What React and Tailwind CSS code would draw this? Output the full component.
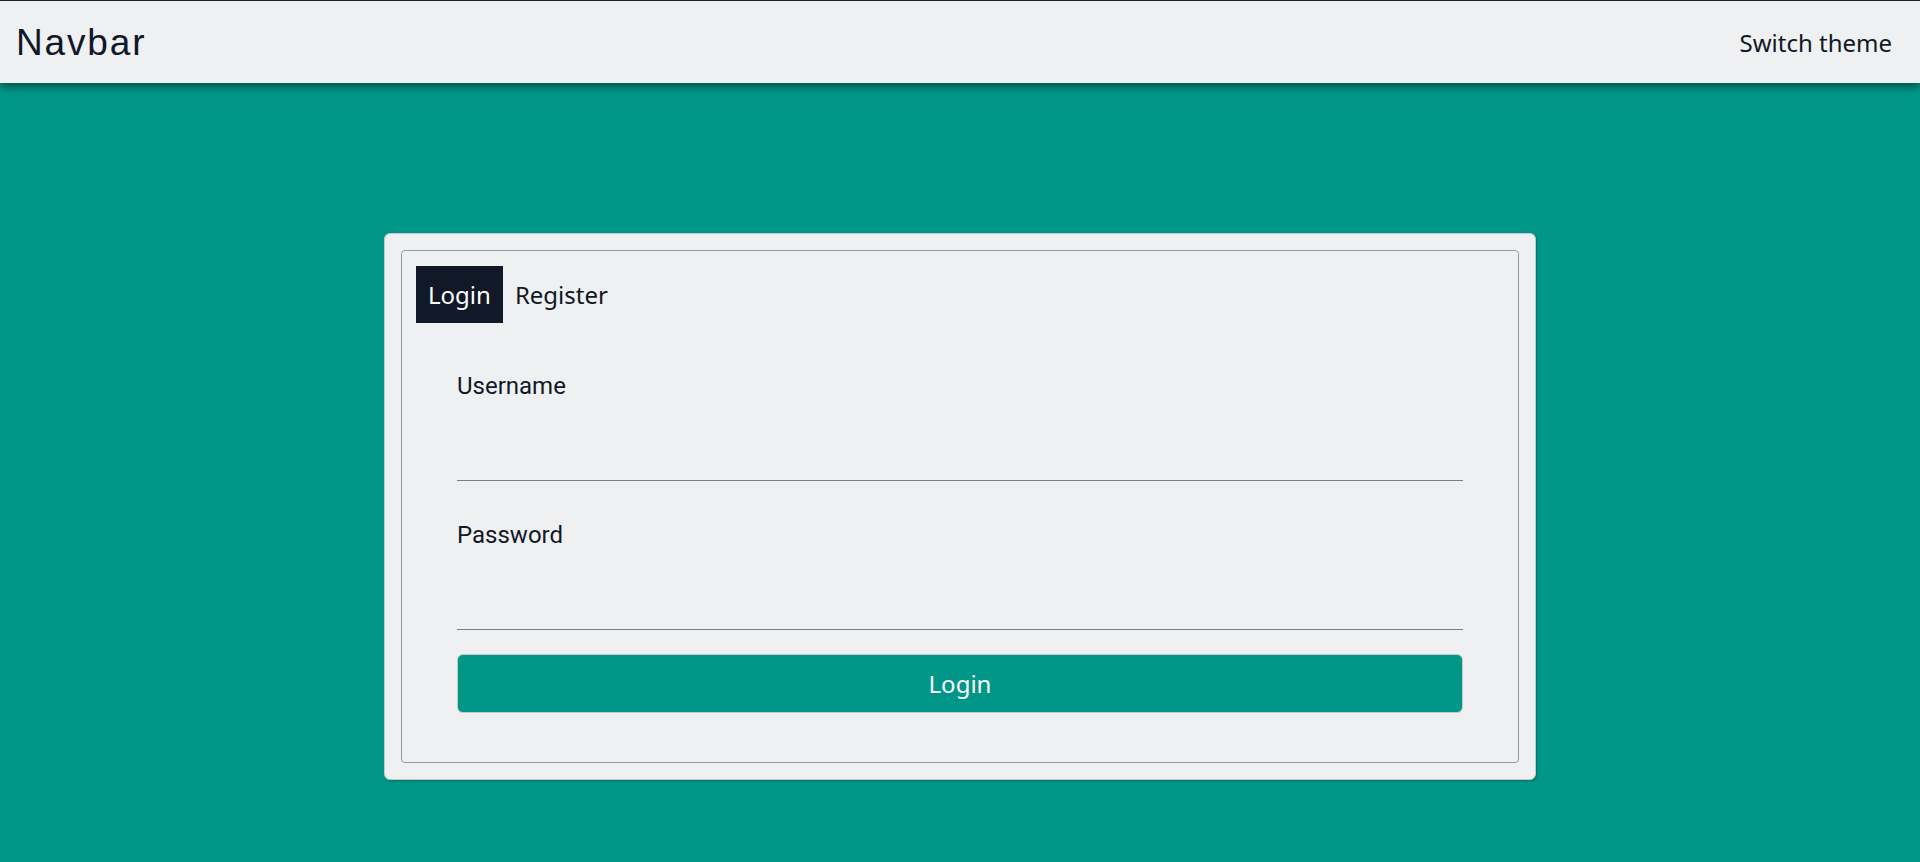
import React, { useState } from 'react'

function Navbar() {
  return (
    <nav className="relative z-10 flex h-[83px] items-center justify-between border-t border-[#222] bg-[#eff0f2] pl-[16px] pr-[28px] shadow-[0_4px_8px_rgba(0,0,0,0.45)]">
      <span className="text-[37px] leading-none tracking-[0.05em] text-[#111827] font-['Liberation_Sans',Arial,sans-serif]">
        Navbar
      </span>
      <button className="pt-[2px] text-[24px] text-[#111827] font-['Noto_Sans',sans-serif]">
        Switch theme
      </button>
    </nav>
  )
}

function Field({ label, type }) {
  return (
    <div className="flex flex-col">
      <label className="text-[24px] leading-[36px] text-[#111827] font-['Roboto',sans-serif]">
        {label}
      </label>
      <input
        type={type}
        className="h-[77px] w-full border-b border-[#808080] bg-transparent text-[24px] focus:outline-none font-['Roboto',sans-serif]"
      />
    </div>
  )
}

export default function App() {
  const [tab, setTab] = useState('login')

  return (
    <div className="min-h-screen bg-[#009688] font-['Noto_Sans',sans-serif]">
      <Navbar />

      <main className="flex justify-center pt-[150px]">
        <div className="w-[1152px] rounded-md border border-[#c4c6c8] bg-[#eff0f2] p-4 shadow-[1px_1px_2px_rgba(0,0,0,0.25)]">
          <div className="rounded border border-[#9a9a9a] px-[14px] pt-[15px] pb-[13px]">
            <div className="flex">
              <button
                onClick={() => setTab('login')}
                className={
                  tab === 'login'
                    ? 'h-[57px] bg-[#111827] px-[12px] text-[24px] text-white'
                    : 'h-[57px] px-[12px] text-[24px] text-[#111827]'
                }
              >
                Login
              </button>
              <button
                onClick={() => setTab('register')}
                className={
                  tab === 'register'
                    ? 'h-[57px] bg-[#111827] px-[12px] text-[24px] text-white'
                    : 'h-[57px] px-[12px] text-[24px] text-[#111827]'
                }
              >
                Register
              </button>
            </div>

            <form className="flex flex-col px-[41px] pt-[45px] pb-[36px]" onSubmit={(e) => e.preventDefault()}>
              <Field label="Username" type="text" />
              <div className="mt-[36px]">
                <Field label="Password" type="password" />
              </div>
              <button
                type="submit"
                className="mt-[24px] h-[59px] w-full rounded-md border border-[#c8c8c8] bg-[#009688] text-[24px] text-white"
              >
                {tab === 'login' ? 'Login' : 'Register'}
              </button>
            </form>
          </div>
        </div>
      </main>
    </div>
  )
}
